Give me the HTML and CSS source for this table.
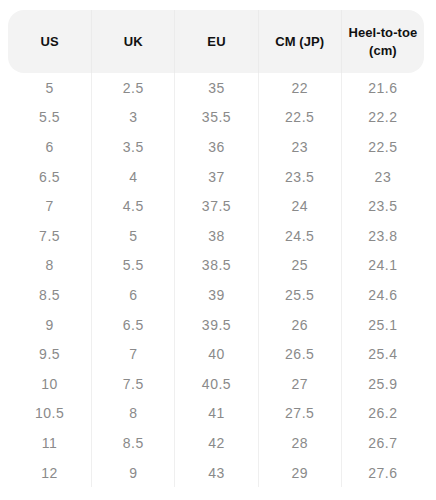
FILE: index.html
```html
<!DOCTYPE html>
<html lang="en">
<head>
  <meta charset="UTF-8" />
  <title>Size chart</title>
  <link rel="stylesheet" href="styles.css">
</head>
<body>
  <div class="chart">
    <div class="row head">
      <div class="cell">US</div>
      <div class="cell">UK</div>
      <div class="cell">EU</div>
      <div class="cell">CM (JP)</div>
      <div class="cell">Heel-to-toe<br>(cm)</div>
    </div>
    <div id="rows"></div>
  </div>

  <script>
    const sizes = [
      ["5", "2.5", "35", "22", "21.6"],
      ["5.5", "3", "35.5", "22.5", "22.2"],
      ["6", "3.5", "36", "23", "22.5"],
      ["6.5", "4", "37", "23.5", "23"],
      ["7", "4.5", "37.5", "24", "23.5"],
      ["7.5", "5", "38", "24.5", "23.8"],
      ["8", "5.5", "38.5", "25", "24.1"],
      ["8.5", "6", "39", "25.5", "24.6"],
      ["9", "6.5", "39.5", "26", "25.1"],
      ["9.5", "7", "40", "26.5", "25.4"],
      ["10", "7.5", "40.5", "27", "25.9"],
      ["10.5", "8", "41", "27.5", "26.2"],
      ["11", "8.5", "42", "28", "26.7"],
      ["12", "9", "43", "29", "27.6"]
    ];

    const rows = document.getElementById("rows");
    sizes.forEach(size => {
      const row = document.createElement("div");
      row.className = "row";
      size.forEach(value => {
        const cell = document.createElement("div");
        cell.className = "cell";
        cell.textContent = value;
        row.appendChild(cell);
      });
      rows.appendChild(row);
    });
  </script>
</body>
</html>
```

FILE: styles.css
```css
body {
  margin: 0;
  padding: 10px 12px 0 8px;
  background-color: #fff;
  font-family: "Liberation Sans", Arial, sans-serif;
}

.chart {
  width: 416px;
}

.row {
  display: grid;
  grid-template-columns: repeat(5, 1fr);
  height: 29.6px;
}

.row .cell {
  display: flex;
  align-items: center;
  justify-content: center;
  text-align: center;
  font-size: 14px;
  letter-spacing: 0.5px;
  color: #8a8a8a;
}

.row .cell + .cell {
  border-left: 1px solid #efefef;
}

.row.head {
  height: 63px;
  background-color: #f3f3f3;
  border-radius: 16px;
}

.row.head .cell {
  font-size: 13px;
  font-weight: bold;
  line-height: 18px;
  letter-spacing: 0.1px;
  color: #111;
}

.row.head .cell + .cell {
  border-left-color: #ebebeb;
}
```
